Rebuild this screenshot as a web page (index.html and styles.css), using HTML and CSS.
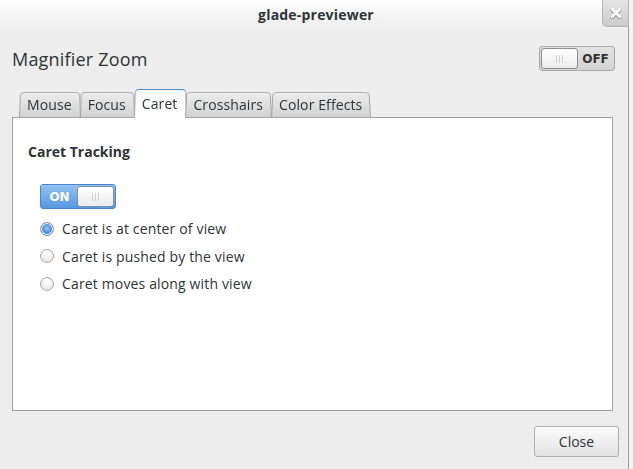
FILE: index.html
```html
<!DOCTYPE html>
<html>
<head>
<meta charset="utf-8">
<link rel="stylesheet" href="styles.css">
</head>
<body>
<div class="screen">
  <div class="window">
    <header class="titlebar">
      <span class="title">glade-previewer</span>
      <button class="wm-close" aria-label="Close window">
        <svg width="12" height="12" viewBox="0 0 12 12"><path d="M2 2 L10 10 M10 2 L2 10" stroke="#8a8a8a" stroke-width="3.2" stroke-linecap="round" transform="translate(0,0.8)"/><path d="M2 2 L10 10 M10 2 L2 10" stroke="#ffffff" stroke-width="2.6" stroke-linecap="round"/></svg>
      </button>
    </header>
    <main class="content">
      <div class="top-row">
        <h1 class="heading">Magnifier Zoom</h1>
        <div class="switch switch-off">
          <span class="slider"><span class="grip"></span><span class="grip"></span><span class="grip"></span></span>
          <span class="switch-label">OFF</span>
        </div>
      </div>
      <div class="notebook">
        <div class="tabs">
          <div class="tab">Mouse</div>
          <div class="tab">Focus</div>
          <div class="tab tab-active">Caret</div>
          <div class="tab">Crosshairs</div>
          <div class="tab">Color Effects</div>
        </div>
        <div class="page">
          <h2 class="section-title">Caret Tracking</h2>
          <div class="section-body">
            <div class="switch switch-on">
              <span class="switch-label">ON</span>
              <span class="slider"><span class="grip"></span><span class="grip"></span><span class="grip"></span></span>
            </div>
            <label class="radio"><span class="radio-dot checked"></span>Caret is at center of view</label>
            <label class="radio"><span class="radio-dot"></span>Caret is pushed by the view</label>
            <label class="radio"><span class="radio-dot"></span>Caret moves along with view</label>
          </div>
        </div>
      </div>
      <div class="actions">
        <button class="button">Close</button>
      </div>
    </main>
  </div>
  <div class="edge"></div>
</div>
</body>
</html>
```
FILE: styles.css
```css
* { box-sizing: border-box; }
html, body { margin: 0; padding: 0; }
body {
  width: 633px;
  height: 469px;
  overflow: hidden;
  font-family: "Open Sans", "DejaVu Sans", sans-serif;
  color: #2e3436;
  background: #ededed;
}
.screen {
  display: flex;
  height: 469px;
}
.window {
  width: 629px;
  height: 469px;
  display: flex;
  flex-direction: column;
  background: #ededed;
  border-right: 1px solid #9c9c9c;
}
.edge {
  flex: 1;
  background: #f4f4f4;
}
.titlebar {
  position: relative;
  height: 30px;
  display: flex;
  align-items: center;
  justify-content: center;
  background: linear-gradient(#fdfdfd, #ededed);
}
.title {
  font-weight: bold;
  font-size: 14px;
  letter-spacing: 0.2px;
  margin-left: 4px;
  margin-top: -2px;
}
.wm-close {
  position: absolute;
  right: -1px;
  top: 0;
  width: 27px;
  height: 27px;
  padding: 0;
  border: 1px solid #b4b4b4;
  border-top: none;
  border-bottom-left-radius: 5px;
  background: linear-gradient(#e4e4e4, #cbcbcb);
  display: flex;
  align-items: center;
  justify-content: center;
}
.content {
  flex: 1;
  display: flex;
  flex-direction: column;
  padding: 16px 10px 0 12px;
}
.top-row {
  display: flex;
  align-items: center;
  justify-content: space-between;
  height: 25px;
}
.heading {
  margin: 0;
  font-size: 18px;
  font-weight: normal;
  letter-spacing: 0.2px;
}
.switch {
  display: flex;
  align-items: center;
  width: 76px;
  height: 25px;
  border: 1px solid #a9a9a9;
  border-radius: 3px;
  padding: 1px;
}
.switch-off {
  margin-right: 3px;
  background: linear-gradient(#e3e3e3, #d3d3d3);
}
.switch-on {
  background: linear-gradient(#93c1f2, #5598e0);
  border-color: #4a85c9;
}
.slider {
  width: 37px;
  height: 21px;
  border: 1px solid #8e8e8e;
  border-radius: 3px;
  background: linear-gradient(#ffffff, #ececec);
  display: flex;
  align-items: center;
  justify-content: center;
  gap: 2px;
}
.switch-on .slider { border-color: #7a8fa8; }
.grip {
  width: 1px;
  height: 8px;
  background: #d0d0d0;
}
.switch-label {
  flex: 1;
  text-align: center;
  font-family: "DejaVu Sans", sans-serif;
  font-weight: bold;
  font-size: 12px;
}
.switch-off .switch-label { color: #333; }
.switch-on .switch-label { color: #ffffff; }

.notebook {
  margin-top: 17px;
  margin-right: 5px;
  display: flex;
  flex-direction: column;
}
.tabs {
  display: flex;
  align-items: flex-end;
  padding-left: 7px;
  height: 30px;
  position: relative;
  z-index: 1;
  margin-bottom: -1px;
}
.tab {
  position: relative;
  height: 27px;
  padding: 4px 8px 0 8px;
  font-size: 14px;
  letter-spacing: 0.1px;
  color: #2e3436;
  white-space: nowrap;
}
.tab::before {
  content: "";
  position: absolute;
  inset: 0 -1px 0 0;
  z-index: -1;
  border: 1px solid #a5a5a5;
  border-radius: 4px 4px 0 0;
  background: linear-gradient(#ececec, #d2d2d2);
  transform: perspective(60px) rotateX(4deg);
  transform-origin: bottom;
}
.tab-active {
  height: 30px;
  padding-top: 6px;
}
.tab-active::before {
  background: linear-gradient(#f6f6f6, #ffffff 60%);
  border-color: #a5a5a5;
  border-top: 1px solid #4a90d9;
  border-bottom-color: #ffffff;
}
.page {
  height: 294px;
  background: #ffffff;
  border: 1px solid #a0a0a0;
  padding: 24px 15px 0 15px;
}
.section-title {
  margin: 0;
  font-size: 14px;
  font-weight: bold;
}
.section-body {
  margin-top: 23px;
  padding-left: 12px;
  display: flex;
  flex-direction: column;
}
.radio {
  display: flex;
  align-items: center;
  height: 27.5px;
  font-size: 14px;
  letter-spacing: 0.15px;
  gap: 8px;
}
.switch-on + .radio { margin-top: 6px; }
.radio-dot {
  width: 14px;
  height: 14px;
  border-radius: 50%;
  border: 1px solid #a8a8a8;
  background: radial-gradient(circle at 50% 30%, #ffffff, #e2e2e2);
}
.radio-dot.checked {
  border-color: #8e9aa6;
  background: radial-gradient(circle at 50% 45%, #9cc6f3 0, #5b9ae0 40%, #2f6fc0 75%);
  box-shadow: inset 0 0 0 1px #ffffff;
}
.actions {
  display: flex;
  justify-content: flex-end;
  padding-top: 15px;
}
.button {
  width: 85px;
  height: 31px;
  margin-right: -1px;
  font-family: "Open Sans", "DejaVu Sans", sans-serif;
  font-size: 14px;
  color: #2e3436;
  border: 1px solid #b0b0b0;
  border-radius: 3px;
  background: linear-gradient(#fbfbfb, #e2e2e2);
}
```
